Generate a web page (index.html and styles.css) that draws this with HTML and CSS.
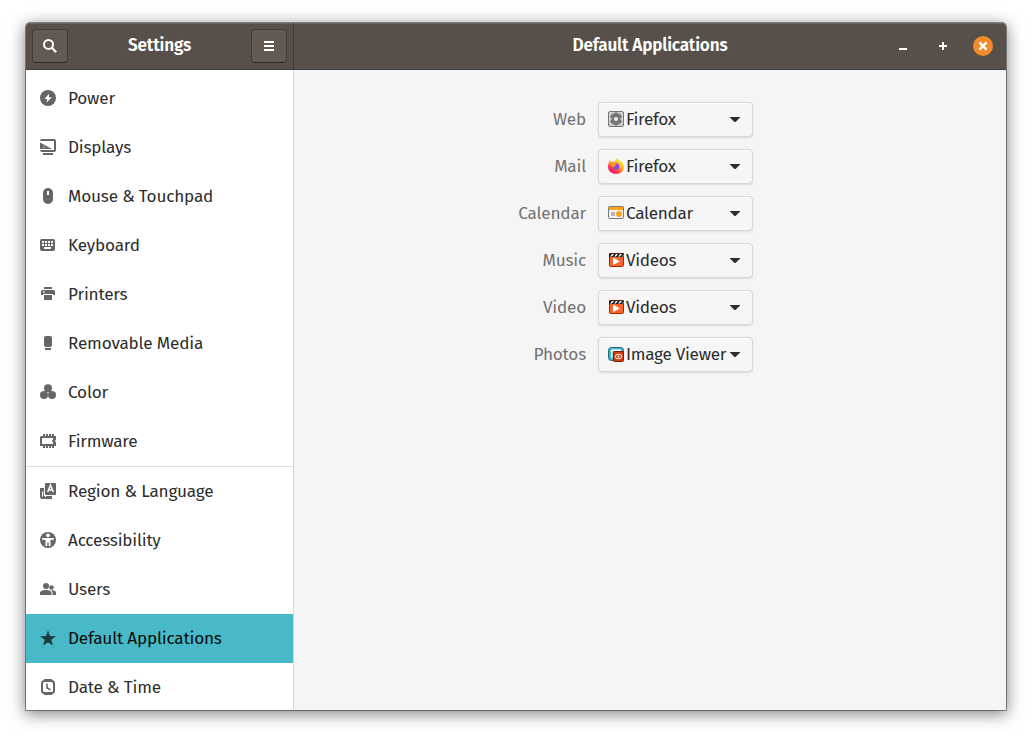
FILE: index.html
```html
<!DOCTYPE html>
<html lang="en">
<head>
<meta charset="utf-8">
<title>Settings</title>
<link rel="stylesheet" href="styles.css">
</head>
<body>
<div class="window">
  <header class="titlebar">
    <div class="side-head">
      <button class="tool" aria-label="Search"><svg width="16" height="16" viewBox="0 0 16 16"><circle cx="6.500" cy="6.400" r="4.500" fill="none" stroke="#fff" stroke-width="2"/><path d="M9.800 9.800l4.400 4.400" stroke="#fff" stroke-width="2.200"/></svg></button>
      <h1 class="title">Settings</h1>
      <button class="tool" aria-label="Menu"><svg width="16" height="16" viewBox="0 0 16 16"><path d="M3 3h10v2H3zM3 7h10v2H3zM3 11h10v2H3z" fill="#fff"/></svg></button>
    </div>
    <div class="main-head">
      <h2 class="title">Default Applications</h2>
      <div class="controls">
        <svg class="ctl" viewBox="0 0 20 20"><path d="M6 12h8v2H6z" fill="#fff"/></svg>
        <svg class="ctl" viewBox="0 0 20 20"><path d="M6 9h8v2H6zM9 6h2v8H9z" fill="#fff"/></svg>
        <svg class="ctl" viewBox="0 0 20 20"><circle cx="10" cy="10" r="10" fill="#f28c2b"/><path d="M6.400 6.400l7.200 7.200M13.600 6.400l-7.200 7.200" stroke="#fff" stroke-width="2.500"/></svg>
      </div>
    </div>
  </header>
  <div class="body">
    <nav class="sidebar">
      <div class="row"><svg class="ico" viewBox="0 0 16 16"><circle cx="8" cy="8" r="8"/><path class="paper" d="M9 3.800L4.400 9H7.200L6.600 12.500 11.800 7.200H8.900z"/></svg><span>Power</span></div>
      <div class="row"><svg class="ico" viewBox="0 0 16 16"><path d="M0 2a2 2 0 0 1 2-2h12a2 2 0 0 1 2 2v9a2 2 0 0 1-2 2H2a2 2 0 0 1-2-2h14V2H0z"/><path d="M0 3.500L12 10H0zM3 14h10v2H3z"/><path class="paper" d="M3 7.500v1h2.500z"/></svg><span>Displays</span></div>
      <div class="row"><svg class="ico" viewBox="0 0 16 16"><rect x="3" y="0" width="10" height="16" rx="5"/><rect class="paper" x="7" y="3" width="2" height="4"/></svg><span>Mouse &amp; Touchpad</span></div>
      <div class="row"><svg class="ico" viewBox="0 0 16 16"><rect x="0" y="2" width="15" height="12" rx="2"/><path class="paper" d="M2 4h2v2H2zM5 4h2v2H5zM8 4h2v2H8zM11 4h2v2h-2zM2 7h2v2H2zM5 7h2v2H5zM8 7h2v2H8zM11 7h2v2h-2zM4 10h7v2H4z"/></svg><span>Keyboard</span></div>
      <div class="row"><svg class="ico" viewBox="0 0 16 16"><path d="M4 1h8v2H4zM2.500 4h11A1.500 1.500 0 0 1 15 5.500V9h-2V8H3v1H1V5.500A1.500 1.500 0 0 1 2.500 4zM4 9h8v5H4z"/><rect class="paper" x="3" y="5.300" width="1.500" height="1.500"/></svg><span>Printers</span></div>
      <div class="row"><svg class="ico" viewBox="0 0 16 16"><rect x="4" y="1" width="8" height="11" rx="2"/><path d="M5 13h6v2H5z"/></svg><span>Removable Media</span></div>
      <div class="row"><svg class="ico" viewBox="0 0 16 16"><circle cx="8" cy="4.200" r="4"/><circle cx="4" cy="11" r="4"/><circle cx="12" cy="11" r="4"/></svg><span>Color</span></div>
      <div class="row"><svg class="ico" viewBox="0 0 16 16"><path d="M1 3h2V1h2v2h1V1h2v2h1V1h2v2h1V1h2v2h2v3.500l-1 1.500 1 1.500V13h-2v2h-2v-2h-1v2H9v-2H8v2H6v-2H5v2H3v-2H0V4zM2 5v6h11V9.500L12 8l1-1.500V5z" fill-rule="evenodd"/></svg><span>Firmware</span></div>
      <div class="separator"></div>
      <div class="row"><svg class="ico" viewBox="0 0 16 16"><path d="M0 5h4v8h8v3H1.500L0 14.500z"/><path class="paper" d="M2 8.500h1.200v5H2zM5 12.800h1v1.500H5z"/><rect x="5" y="0" width="11" height="12" rx="1"/><path d="M7.700 9L10.500 2l2.800 7M8.700 7h3.600" fill="none" stroke="#fff" stroke-width="1.500"/></svg><span>Region &amp; Language</span></div>
      <div class="row"><svg class="ico" viewBox="0 0 16 16"><circle cx="8" cy="8" r="8"/><circle class="paper" cx="8" cy="3.300" r="1.900"/><path class="paper" d="M2 6h12v1.600l-3.500.5V14H8.700v-3.500H7.300V14H5.500V8.100L2 7.600z"/></svg><span>Accessibility</span></div>
      <div class="row"><svg class="ico" viewBox="0 0 16 16"><circle cx="6" cy="5" r="3"/><circle cx="11.500" cy="6.500" r="2.300"/><path d="M0 14v-2c0-2 2.500-3 6-3s5.500 1 5.500 3v2zM12.500 14v-2c0-1-.5-2-1.500-2.600 3-.4 5 .6 5 2.200V14z"/></svg><span>Users</span></div>
      <div class="row selected"><svg class="ico" viewBox="0 0 16 16"><path d="M8 .5l2 5.500 6 .2-4.700 3.600 1.700 5.700L8 12.200 3 15.500l1.700-5.700L0 6.200 6 6z"/></svg><span>Default Applications</span></div>
      <div class="row"><svg class="ico" viewBox="0 0 16 16"><path d="M4 0h8v2H4zM4 14h8v2H4z"/><rect x="2" y="2" width="12" height="12" rx="2.500" fill="none" stroke="#666" stroke-width="2"/><path d="M7 4.500V9l3.500 1.800" fill="none" stroke="#666" stroke-width="1.600"/></svg><span>Date &amp; Time</span></div>
    </nav>
    <main class="content">
      <div class="form">
        <label>Web</label>
        <div class="combo"><svg class="app" viewBox="0 0 16 16"><rect x=".5" y=".5" width="15" height="15" rx="1.500" fill="#d0d0d0" stroke="#777"/><path d="M6.500 2h3v2l2-1 2 3-1.500 1v2l1.500 1-2 3-2-1v2h-3v-2l-2 1-2-3L4 9V7L2.500 6l2-3 2 1z" fill="#777" stroke="#777"/><circle cx="8" cy="8" r="2" fill="#eee"/></svg><span>Firefox</span><svg class="arrow" viewBox="0 0 10 5"><path d="M0 0h10v.6L5.800 4.700Q5 5.200 4.200 4.700L0 .6z"/></svg></div>
        <label>Mail</label>
        <div class="combo"><svg class="app" viewBox="0 0 16 16"><defs><linearGradient id="fox" x1="1" y1="0" x2=".3" y2="1"><stop offset=".2" stop-color="#fff044"/><stop offset=".55" stop-color="#ff9a24"/><stop offset=".8" stop-color="#ff334a"/><stop offset="1" stop-color="#e3168a"/></linearGradient></defs><path d="M2 2l1 2 2-.5L6.500 4 9 0c1 1.500 2 1.600 3 2.500C15 4.500 16 6 16 9a8 7 0 0 1-16 0c0-3 1-4.500 2-7z" fill="url(#fox)"/><circle cx="8" cy="8.500" r="3.200" fill="#8c45e6"/><path d="M1.500 5C4 3 7 4 7.500 6L9 6.500 6.500 8c0 2-2.500 1.500-2.500 0z" fill="#ff9828"/></svg><span>Firefox</span><svg class="arrow" viewBox="0 0 10 5"><path d="M0 0h10v.6L5.800 4.700Q5 5.200 4.200 4.700L0 .6z"/></svg></div>
        <label>Calendar</label>
        <div class="combo"><svg class="app" viewBox="0 0 16 16"><rect x=".5" y="1.500" width="15" height="12" rx="1" fill="#f4f4f4" stroke="#777"/><path d="M1 2h14v3H1z" fill="#ffa31a"/><path d="M3 7h4v4H3z" fill="#b5b5b5"/><circle cx="11" cy="9" r="3" fill="#ffa31a"/></svg><span>Calendar</span><svg class="arrow" viewBox="0 0 10 5"><path d="M0 0h10v.6L5.800 4.700Q5 5.200 4.200 4.700L0 .6z"/></svg></div>
        <label>Music</label>
        <div class="combo"><svg class="app" viewBox="0 0 16 16"><rect x="1.500" y="1.500" width="14" height="13" rx="1" fill="#fa6428" stroke="#9e2b08"/><path d="M1 1.500h15V5H1z" fill="#111"/><path d="M2 4.500L4 2h2L4 4.500zM6 4.500L8 2h2L8 4.500zM10 4.500L12 2h2l-2 2.500zM14 4.500l1.500-2v2z" fill="#fff"/><path d="M5 5.500L12 9.500 5 13z" fill="#fff"/></svg><span>Videos</span><svg class="arrow" viewBox="0 0 10 5"><path d="M0 0h10v.6L5.800 4.700Q5 5.200 4.200 4.700L0 .6z"/></svg></div>
        <label>Video</label>
        <div class="combo"><svg class="app" viewBox="0 0 16 16"><rect x="1.500" y="1.500" width="14" height="13" rx="1" fill="#fa6428" stroke="#9e2b08"/><path d="M1 1.500h15V5H1z" fill="#111"/><path d="M2 4.500L4 2h2L4 4.500zM6 4.500L8 2h2L8 4.500zM10 4.500L12 2h2l-2 2.500zM14 4.500l1.500-2v2z" fill="#fff"/><path d="M5 5.500L12 9.500 5 13z" fill="#fff"/></svg><span>Videos</span><svg class="arrow" viewBox="0 0 10 5"><path d="M0 0h10v.6L5.800 4.700Q5 5.200 4.200 4.700L0 .6z"/></svg></div>
        <label>Photos</label>
        <div class="combo"><svg class="app" viewBox="0 0 16 16"><rect x=".5" y="1.500" width="15" height="13" rx="3" fill="#48b9c7" stroke="#176775"/><path d="M3 3.500h10V5H4.500v6.500H3z" fill="#fff"/><rect x="5.500" y="5.500" width="10" height="10" rx="1" fill="#d93c0a" stroke="#74220c"/><ellipse cx="10.500" cy="10.500" rx="3.300" ry="2.300" fill="none" stroke="#fff"/><circle cx="10.500" cy="10.500" r="1" fill="#fff"/></svg><span>Image Viewer</span><svg class="arrow" viewBox="0 0 10 5"><path d="M0 0h10v.6L5.800 4.700Q5 5.200 4.200 4.700L0 .6z"/></svg></div>
      </div>
    </main>
  </div>
</div>
</body>
</html>
```
FILE: styles.css
```css
* { box-sizing: border-box; }
html, body { margin: 0; height: 100%; overflow: hidden; background: #fff; }
body { padding: 23px 26px 29px; font: 17.2px/24px "Fira Sans", "Noto Sans", sans-serif; letter-spacing: -.2px; color: #2d2d2d; }
.window { width: 980px; height: 687px; display: flex; flex-direction: column; border-radius: 4px 4px 0 0;
  box-shadow: 0 0 0 1px rgba(0,0,0,.4), 0 3px 16px 1px rgba(0,0,0,.5); }
.titlebar { display: flex; height: 47px; flex: none; background: #574f4a; border-bottom: 1px solid #433b37; box-shadow: inset 0 1px #6b645f; border-radius: 4px 4px 0 0; }
.side-head { width: 268px; display: flex; align-items: center; justify-content: space-between; padding: 0 6px; border-right: 1px solid #433b37; }
.main-head { flex: 1; display: grid; grid-template-columns: 110px 1fr 110px; align-items: center; }
.main-head .title { grid-column: 2; }
.title { margin: 0; font-size: 17.2px; font-weight: 600; color: #fff; text-align: center; white-space: nowrap; }
.tool { width: 36px; height: 34px; padding: 0; display: grid; place-items: center; background: #625952; border: 1px solid #443c38; border-bottom-color: #302a27; border-radius: 4px; }
.controls { display: flex; gap: 20px; justify-content: flex-end; padding-right: 13px; }
.ctl { width: 20px; height: 20px; flex: none; }
.body { flex: 1; display: flex; min-height: 0; }
.sidebar { width: 268px; padding-top: 4px; overflow: hidden; background: #fff; border-right: 1px solid #d6d6d6; }
.row { height: 49px; padding: 0 0 1px 14px; display: flex; align-items: center; gap: 12px; white-space: nowrap; }
.row span, .combo span { padding-top: 2px; }
.ico { width: 16px; height: 16px; flex: none; fill: #666; }
.paper { fill: #fff; }
.separator { height: 1px; background: #dedede; }
.selected { background: #48b9c7; color: #0b0b0b; }
.selected .ico { fill: #1d3a40; }
.content { flex: 1; background: #f5f5f5; padding: 32px 0 0 192px; }
.form { display: grid; grid-template-columns: 100px 155px; gap: 12px; }
label { height: 35px; text-align: right; line-height: 36px; color: #727272; white-space: nowrap; }
.combo { height: 35px; display: flex; align-items: center; gap: 2px; padding: 0 12px 1px 9px; border: 1px solid #d8d8d8; border-radius: 4px; background: #f6f6f6; box-shadow: inset 0 1px #fff, 0 1px 2px rgba(0,0,0,.1); letter-spacing: -.3px; white-space: nowrap; }
.app { width: 16px; height: 16px; flex: none; }
.arrow { width: 10px; height: 5px; margin: 1px 0 0 auto; flex: none; fill: #2d2d2d; }
```
